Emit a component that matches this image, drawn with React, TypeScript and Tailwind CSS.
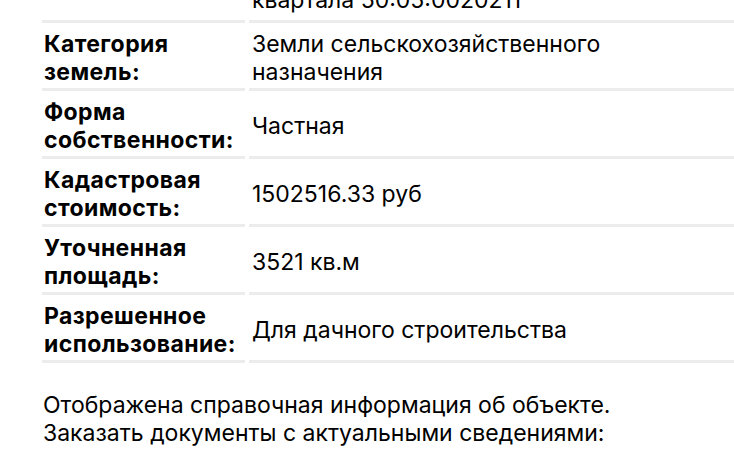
import { Fragment } from 'react';

const rows = [
  { label: 'Адрес:', value: ['Московская область,', 'Дмитровский район, в пределах', 'квартала 50:05:0020211'] },
  { label: 'Категория земель:', value: ['Земли сельскохозяйственного назначения'] },
  { label: 'Форма собственности:', value: ['Частная'] },
  { label: 'Кадастровая стоимость:', value: ['1502516.33 руб'] },
  { label: 'Уточненная площадь:', value: ['3521 кв.м'] },
  { label: 'Разрешенное использование:', value: ['Для дачного строительства'] },
];

const App = () => {
  return (
    <div className="h-[466px] w-[734px] overflow-hidden bg-white text-[23px] leading-[28px] text-black [font-family:Inter,'Liberation_Sans',Arial,sans-serif]">
      <div className="-mt-[77px] pl-[38px]">
        <table className="w-[760px] table-fixed border-separate border-spacing-[4px]">
          <colgroup>
            <col className="w-[203px]" />
            <col />
          </colgroup>
          <tbody>
            {rows.map((row, index) => (
              <tr key={row.label}>
                <td className="border-b-[3px] border-[#ececec] pb-[2px] pl-[2px] pr-[2px] pt-[3px] align-middle font-bold tracking-[0.4px]">
                  {row.label}
                </td>
                <td className="border-b-[3px] border-[#ececec] pb-[2px] pl-[3px] pt-[3px] align-middle">
                  <div className={index === 0 ? 'mb-[4px] max-w-[440px]' : 'max-w-[440px]'}>
                    {row.value.map((line, i) => (
                      <Fragment key={line}>
                        {i > 0 && <br />}
                        {line}
                      </Fragment>
                    ))}
                  </div>
                </td>
              </tr>
            ))}
          </tbody>
        </table>
        <div className="mt-[24px] pl-[5px]">
          <p>Отображена справочная информация об объекте.</p>
          <p>Заказать документы с актуальными сведениями:</p>
        </div>
      </div>
    </div>
  );
};

export default App;
